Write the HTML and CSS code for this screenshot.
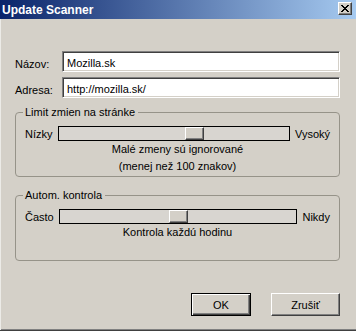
FILE: index.html
```html
<!DOCTYPE html>
<html lang="sk">

<head>
    <meta charset="UTF-8">
    <meta name="viewport" content="width=device-width, initial-scale=1.0">
    <title>Update Scanner</title>

    <link rel="stylesheet" href="styles.css">
</head>

<body>
    <div class="window">
        <div class="titlebar">
            <span class="title">Update Scanner</span>
            <span class="close-btn">
                <svg width="8" height="7" viewBox="0 0 8 7" shape-rendering="crispEdges">
                    <path fill="#000" d="M0 0h2v1H0z M6 0h2v1H6z M1 1h2v1H1z M5 1h2v1H5z M2 2h4v1H2z M3 3h2v1H3z M2 4h4v1H2z M1 5h2v1H1z M5 5h2v1H5z M0 6h2v1H0z M6 6h2v1H6z"/>
                </svg>
            </span>
        </div>

        <div class="content">
            <div class="field-row">
                <label for="name" class="field-label">Názov:</label>
                <input type="text" id="name" class="field-input" value="Mozilla.sk">
            </div>
            <div class="field-row">
                <label for="url" class="field-label">Adresa:</label>
                <input type="text" id="url" class="field-input" value="http://mozilla.sk/">
            </div>

            <fieldset class="group">
                <legend>Limit zmien na stránke</legend>
                <div class="scale-row">
                    <span class="scale-label">Nízky</span>
                    <div class="scale-track">
                        <div class="scale-thumb" style="left: calc((100% - 19px) * 0.6)"></div>
                    </div>
                    <span class="scale-label scale-label-end">Vysoký</span>
                </div>
                <div class="scale-note">Malé zmeny sú ignorované</div>
                <div class="scale-note scale-note-second">(menej než 100 znakov)</div>
            </fieldset>

            <fieldset class="group group-auto">
                <legend>Autom. kontrola</legend>
                <div class="scale-row">
                    <span class="scale-label">Často</span>
                    <div class="scale-track">
                        <div class="scale-thumb" style="left: calc((100% - 19px) * 0.5)"></div>
                    </div>
                    <span class="scale-label scale-label-end">Nikdy</span>
                </div>
                <div class="scale-note">Kontrola každú hodinu</div>
            </fieldset>

            <div class="buttons">
                <button type="button" class="btn btn-default">OK</button>
                <button type="button" class="btn btn-cancel">Zrušiť</button>
            </div>
        </div>
    </div>
</body>

</html>
```

FILE: styles.css
```css
/* Global reset */

* {
    margin: 0;
    padding: 0;
    box-sizing: border-box;
}

body {
    font-family: 'Liberation Sans', Arial, sans-serif;
    font-size: 11px;
    color: #000;
    background-color: #d4d0c8;
}

.window {
    width: 356px;
    height: 331px;
    display: flex;
    flex-direction: column;
    background-color: #d4d0c8;
    border-bottom: 1px solid #404040;
    box-shadow: inset 0 -1px 0 #808080;
}

/* Title bar */

.titlebar {
    height: 19px;
    display: flex;
    align-items: flex-start;
    padding: 2px 4px 0 2px;
    background: linear-gradient(to right, #0a246a, #a6caf0);
}

.title {
    flex: 1;
    color: white;
    font-size: 12px;
    font-weight: bold;
    line-height: 17px;
}

.close-btn {
    width: 14px;
    height: 13px;
    display: flex;
    justify-content: center;
    align-items: center;
    background-color: #d4d0c8;
    border: 1px solid;
    border-color: #fff #404040 #404040 #fff;
    box-shadow: inset -1px -1px 0 #808080;
}

/* Dialog content */

.content {
    flex: 1;
    padding: 32px 16px 0 14px;
    border-left: 1px solid #ecebe7;
}

.field-row {
    display: flex;
    align-items: flex-start;
    height: 21px;
    margin-bottom: 5px;
}

.field-label {
    width: 47px;
    line-height: 13px;
    margin-top: 7px;
}

.field-input {
    flex: 1;
    min-width: 0;
    height: 21px;
    padding: 2px 4px 0;
    font-family: 'Liberation Sans', Arial, sans-serif;
    font-size: 11px;
    line-height: 15px;
    color: #000;
    background-color: white;
    border: 1px solid;
    border-color: #808080 #fff #fff #808080;
    box-shadow: inset 1px 1px 0 #404040, inset -1px -1px 0 #d4d0c8;
    outline: none;
}

/* Group boxes */

.group {
    margin-top: 8px;
    padding: 7px 9px 3px;
    border: 1px solid #969389;
    border-radius: 4px;
}

.group legend {
    margin-left: -2px;
    padding: 0 3px 0 2px;
    line-height: 13px;
}

.group-auto {
    margin-top: 12px;
    padding-bottom: 21px;
}

.scale-row {
    display: flex;
    align-items: flex-start;
    height: 15px;
}

.scale-label {
    line-height: 13px;
    margin-top: 2px;
    margin-right: 5px;
}

.scale-label-end {
    margin-right: 0;
    margin-left: 5px;
}

.scale-track {
    position: relative;
    flex: 1;
    height: 15px;
    background-color: #d8d5d0;
    border: 1px solid #000;
}

.scale-thumb {
    position: absolute;
    top: 0;
    width: 19px;
    height: 13px;
    background-color: #d4d0c8;
    border: 1px solid;
    border-color: #fff #404040 #404040 #fff;
    box-shadow: inset -1px -1px 0 #808080;
}

.scale-note {
    text-align: center;
    line-height: 13px;
    margin-top: 2px;
}

.scale-note-second {
    margin-top: 4px;
}

/* Buttons */

.buttons {
    display: flex;
    justify-content: flex-end;
    gap: 20px;
    margin-top: 32px;
}

.btn {
    height: 23px;
    font-family: 'Liberation Sans', Arial, sans-serif;
    font-size: 11px;
    color: #000;
    background-color: #d4d0c8;
    border: 1px solid;
    border-color: #fff #404040 #404040 #fff;
    box-shadow: inset -1px -1px 0 #808080;
}

.btn-default {
    width: 60px;
    border-color: #000;
    box-shadow: inset 1px 1px 0 #fff, inset -1px -1px 0 #404040, inset -2px -2px 0 #808080;
}

.btn-cancel {
    width: 69px;
}
```
